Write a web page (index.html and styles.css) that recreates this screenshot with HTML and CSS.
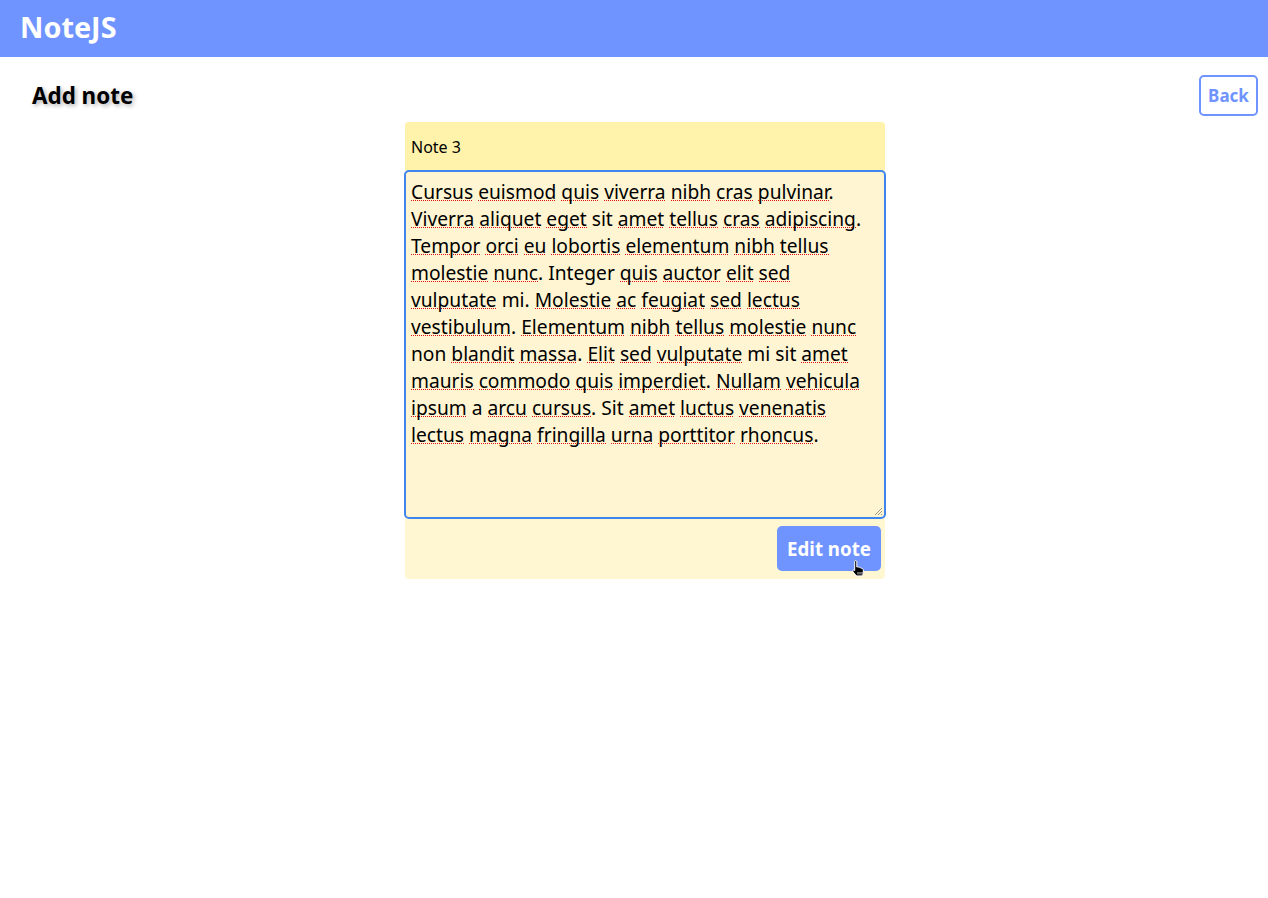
FILE: index.html
```html
<!DOCTYPE html>
<html lang="en">
<head>
<meta charset="utf-8">
<title>NoteJS</title>
<link rel="stylesheet" href="styles.css">
</head>
<body>
<header class="topbar">
  <span class="brand">NoteJS</span>
</header>
<main class="page">
  <div class="page-head">
    <h2 class="page-title">Add note</h2>
    <button class="back-btn">Back</button>
  </div>
  <form class="note-card">
    <div class="note-title">Note 3</div>
    <div class="note-body" role="textbox" aria-multiline="true"><span class="sp">Cursus</span> <span class="sp">euismod</span> <span class="sp">quis</span> <span class="sp">viverra</span> <span class="sp">nibh</span> <span class="sp">cras</span> <span class="sp">pulvinar</span>. <span class="sp">Viverra</span> <span class="sp">aliquet</span> <span class="sp">eget</span> sit <span class="sp">amet</span> <span class="sp">tellus</span> <span class="sp">cras</span> <span class="sp">adipiscing</span>. <span class="sp">Tempor</span> <span class="sp">orci</span> <span class="sp">eu</span> <span class="sp">lobortis</span> <span class="sp">elementum</span> <span class="sp">nibh</span> <span class="sp">tellus</span> <span class="sp">molestie</span> <span class="sp">nunc</span>. Integer <span class="sp">quis</span> <span class="sp">auctor</span> <span class="sp">elit</span> <span class="sp">sed</span> <span class="sp">vulputate</span> mi. <span class="sp">Molestie</span> <span class="sp">ac</span> <span class="sp">feugiat</span> <span class="sp">sed</span> <span class="sp">lectus</span> <span class="sp">vestibulum</span>. <span class="sp">Elementum</span> <span class="sp">nibh</span> <span class="sp">tellus</span> <span class="sp">molestie</span> <span class="sp">nunc</span> non <span class="sp">blandit</span> <span class="sp">massa</span>. <span class="sp">Elit</span> <span class="sp">sed</span> <span class="sp">vulputate</span> mi sit <span class="sp">amet</span> <span class="sp">mauris</span> <span class="sp">commodo</span> <span class="sp">quis</span> <span class="sp">imperdiet</span>. <span class="sp">Nullam</span> <span class="sp">vehicula</span> <span class="sp">ipsum</span> a <span class="sp">arcu</span> <span class="sp">cursus</span>. Sit <span class="sp">amet</span> <span class="sp">luctus</span> <span class="sp">venenatis</span> <span class="sp">lectus</span> <span class="sp">magna</span> <span class="sp">fringilla</span> <span class="sp">urna</span> <span class="sp">porttitor</span> <span class="sp">rhoncus</span>.<svg class="grip" width="10" height="10" viewBox="0 0 10 10"><path d="M9 2L2 9M9 5L5 9M9 8L8 9" stroke="#9a9a8a" stroke-width="1"/></svg></div>
    <div class="note-actions">
      <button type="button" class="edit-btn">Edit note<svg class="cursor" width="16" height="18" viewBox="0 0 16 18"><path d="M4.5 1.5c.8 0 1.3.5 1.3 1.3V8l.6-.1c.6-.3 1.3 0 1.5.5.6-.3 1.3 0 1.5.6.6-.3 1.4 0 1.5.7.7-.2 1.4.3 1.4 1v3.3c0 1.4-.8 2.5-2 2.9H6.5C5 16.9 3.3 14.5 2 12.6c-.5-.7-.2-1.5.5-1.6.5-.1.9.2 1.2.6V2.8c0-.8.2-1.3.8-1.3z" fill="#000" stroke="#fff" stroke-width="1"/><path d="M7 13v2.5M9 13v2.5M11 13v2.5" stroke="#fff" stroke-width=".8"/></svg></button>
    </div>
  </form>
</main>
</body>
</html>
```

FILE: styles.css
```css
* { box-sizing: border-box; }

html, body {
  margin: 0;
  padding: 0;
  background: #ffffff;
  font-family: "Noto Sans", "Open Sans", sans-serif;
  color: #000;
}

.topbar {
  height: 57px;
  background: #7094ff;
  display: flex;
  align-items: center;
  padding-left: 20px;
}

.brand {
  color: #ffffff;
  font-size: 28.8px;
  font-weight: 700;
  line-height: 1;
  margin-top: -2px;
}

.page {
  padding: 18px 10px 0 32px;
}

.page-head {
  display: flex;
  justify-content: space-between;
  align-items: center;
  height: 41px;
}

.page-title {
  margin: 0;
  font-size: 22.4px;
  font-weight: 700;
  text-shadow: 2px 2px 4px rgba(0, 0, 0, 0.3);
}

.back-btn {
  width: 59px;
  height: 41px;
  border: 2px solid #7094ff;
  border-radius: 5px;
  background: #ffffff;
  color: #7094ff;
  font-family: "Noto Sans", "Open Sans", sans-serif;
  font-size: 17px;
  font-weight: 700;
  padding: 0 0 1px;
}

.note-card {
  width: 480px;
  margin: 6px auto 0;
  border-radius: 4px;
  background: #fff6d2;
  display: flex;
  flex-direction: column;
}

.note-title {
  height: 48px;
  background: #fff2ab;
  border-radius: 4px 4px 0 0;
  font-size: 16px;
  padding: 14px 6px 0;
  line-height: 22px;
}

.note-body {
  position: relative;
  margin: 0 -1px;
  height: 349px;
  border: 2px solid #4085ee;
  border-radius: 5px;
  background: #fff5d2;
  padding: 6px 5px;
  font-size: 19.2px;
  line-height: 27px;
  color: #000;
}

.sp {
  background-image: repeating-linear-gradient(to right, #e01010 0 1px, transparent 1px 2px);
  background-repeat: no-repeat;
  background-size: 100% 1px;
  background-position: 0 calc(100% - 4px);
}

.grip {
  position: absolute;
  right: 1px;
  bottom: 1px;
}

.note-actions {
  height: 60px;
  display: flex;
  justify-content: flex-end;
  padding: 7px 4px 0 0;
  border-radius: 0 0 4px 4px;
}

.edit-btn {
  position: relative;
  width: 104px;
  height: 45px;
  border: none;
  border-radius: 5px;
  background: #7094ff;
  color: #ffffff;
  font-family: "Noto Sans", "Open Sans", sans-serif;
  font-size: 18.7px;
  font-weight: 700;
  padding: 0;
}

.cursor {
  position: absolute;
  left: 74px;
  top: 33px;
}
```
